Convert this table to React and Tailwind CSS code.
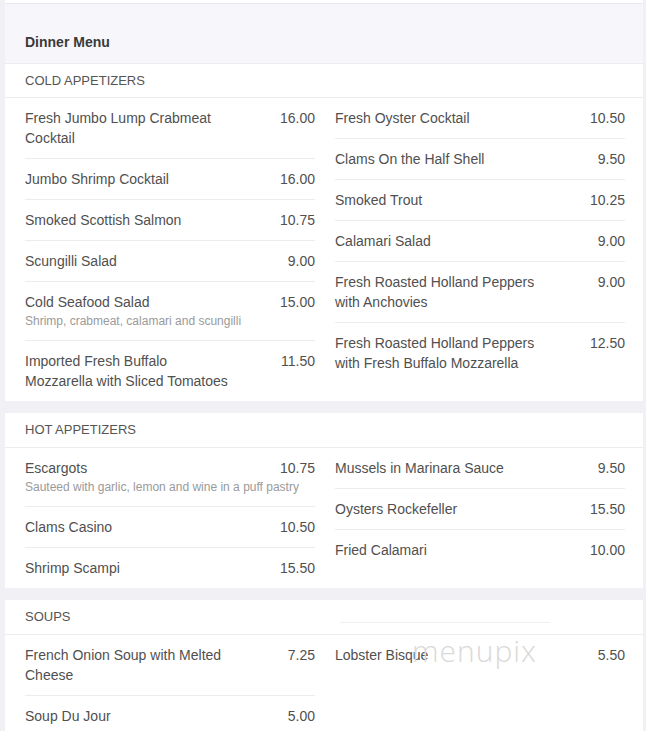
const sections = [
  {
    title: 'COLD APPETIZERS',
    left: [
      { name: 'Fresh Jumbo Lump Crabmeat Cocktail', price: '16.00' },
      { name: 'Jumbo Shrimp Cocktail', price: '16.00' },
      { name: 'Smoked Scottish Salmon', price: '10.75' },
      { name: 'Scungilli Salad', price: '9.00' },
      { name: 'Cold Seafood Salad', price: '15.00', desc: 'Shrimp, crabmeat, calamari and scungilli' },
      { name: 'Imported Fresh Buffalo Mozzarella with Sliced Tomatoes', price: '11.50' },
    ],
    right: [
      { name: 'Fresh Oyster Cocktail', price: '10.50' },
      { name: 'Clams On the Half Shell', price: '9.50' },
      { name: 'Smoked Trout', price: '10.25' },
      { name: 'Calamari Salad', price: '9.00' },
      { name: 'Fresh Roasted Holland Peppers with Anchovies', price: '9.00' },
      { name: 'Fresh Roasted Holland Peppers with Fresh Buffalo Mozzarella', price: '12.50' },
    ],
  },
  {
    title: 'HOT APPETIZERS',
    left: [
      { name: 'Escargots', price: '10.75', desc: 'Sauteed with garlic, lemon and wine in a puff pastry' },
      { name: 'Clams Casino', price: '10.50' },
      { name: 'Shrimp Scampi', price: '15.50' },
    ],
    right: [
      { name: 'Mussels in Marinara Sauce', price: '9.50' },
      { name: 'Oysters Rockefeller', price: '15.50' },
      { name: 'Fried Calamari', price: '10.00' },
    ],
  },
  {
    title: 'SOUPS',
    left: [
      { name: 'French Onion Soup with Melted Cheese', price: '7.25' },
      { name: 'Soup Du Jour', price: '5.00' },
    ],
    right: [{ name: 'Lobster Bisque', price: '5.50' }],
  },
];

const Item = ({ item }) => (
  <div className="py-[10px] border-b border-[#ececf0] last:border-b-0">
    <div className="flex justify-between gap-4">
      <div className="text-[14px] leading-[20px] text-[#505050] max-w-[208px]">{item.name}</div>
      <div className="text-[14px] leading-[20px] text-[#505050] shrink-0">{item.price}</div>
    </div>
    {item.desc && <div className="text-[12px] leading-[18px] text-[#9a9a9a]">{item.desc}</div>}
  </div>
);

const Section = ({ section, first }) => (
  <div className="bg-white">
    <div
      className={
        first
          ? 'pl-5 pt-[8px] pb-[8px] text-[13px] leading-[17px] text-[#555] border-b border-[#ececf0]'
          : 'pl-5 pt-[8px] pb-[9px] text-[13px] leading-[17px] text-[#555] border-b border-[#ececf0]'
      }
    >
      {section.title}
    </div>
    <div className="grid grid-cols-2 gap-x-5 pl-5 pr-[18px]">
      <div className="flex flex-col">
        {section.left.map((it) => (
          <Item key={it.name} item={it} />
        ))}
      </div>
      <div className="flex flex-col">
        {section.right.map((it) => (
          <Item key={it.name} item={it} />
        ))}
      </div>
    </div>
  </div>
);

export default function App() {
  return (
    <div className="h-[731px] overflow-hidden bg-[#f1f1f5] pl-[5px] pr-[3px] font-['Liberation_Sans',Arial,sans-serif] relative">
      <div className="h-[4px] bg-white border-b border-[#e8e8ee]" />
      <div className="bg-[#f7f7fb] pl-5 pt-[30px] pb-[12px] border-b border-[#ececf0]">
        <div className="text-[14px] leading-[17px] font-bold text-[#3a3a3a]">Dinner Menu</div>
      </div>
      <div className="flex flex-col gap-3">
        {sections.map((s, i) => (
          <Section key={s.title} section={s} first={i === 0} />
        ))}
      </div>
      <div className="absolute left-[340px] top-[622px] w-[210px] border-t border-[#f0f0f0]" />
      <div className="absolute left-[412px] top-[635px] text-[30px] leading-[32px] font-light tracking-[1px] text-[#d9d9d9] font-['Open_Sans',sans-serif] pointer-events-none">
        menupix
      </div>
    </div>
  );
}
